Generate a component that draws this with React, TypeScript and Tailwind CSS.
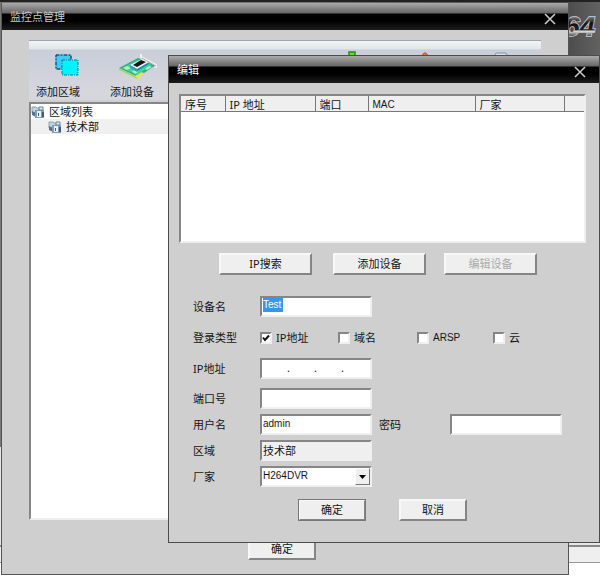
import type { ReactNode } from 'react';

const latin = "font-['Liberation_Sans','Noto_Sans_CJK_SC',sans-serif] text-[10px]";

const columns = [
  { label: '序号', width: 'w-11' },
  { label: 'IP 地址', width: 'w-[90px]' },
  { label: '端口', width: 'w-[53px]' },
  { label: 'MAC', width: 'w-[107px]', style: latin },
  { label: '厂家', width: 'w-[89px]' },
  { label: '', width: '' },
];

const loginTypes = [
  { id: 'ip', label: 'IP地址', checked: true },
  { id: 'domain', label: '域名', checked: false },
  { id: 'arsp', label: 'ARSP', checked: false, style: latin },
  { id: 'cloud', label: '云', checked: false },
];

const sunken = 'border-2 border-t-[#868686] border-l-[#868686] border-r-[#efefef] border-b-[#efefef]';
const field = `h-[21px] w-[112px] px-px pb-0.5 leading-4 outline-none ${sunken}`;

function TitleBar({ title, className }: { title: string; className: string }) {
  return (
    <header
      className={`flex h-[27px] shrink-0 items-center justify-between bg-[linear-gradient(#aaa_0px,#666_10px,#000_11px,#000_18px,#1c1c1c_27px)] ${className}`}
    >
      <h2 className="leading-4">{title}</h2>
      <button type="button" aria-label="关闭" className="pt-1">
        <svg width="12" height="12" viewBox="0 0 12 12" stroke="#c8c8c8" strokeWidth="1.6">
          <path d="M1 1l10 10M11 1L1 11" />
        </svg>
      </button>
    </header>
  );
}

function PushButton({ children, className, disabled }: { children: ReactNode; className: string; disabled?: boolean }) {
  return (
    <button
      type="button"
      disabled={disabled}
      className={`h-[22px] border-2 border-t-[#f8f8f8] border-l-[#f8f8f8] border-r-[#858585] border-b-[#858585] bg-[#efefef] leading-4 disabled:text-[#aaa] ${className}`}
    >
      {children}
    </button>
  );
}

function FormRow({ label, htmlFor, children }: { label: string; htmlFor?: string; children: ReactNode }) {
  return (
    <div className="flex items-center">
      <label htmlFor={htmlFor} className="w-[67px] shrink-0 leading-4">
        {label}
      </label>
      {children}
    </div>
  );
}

function RegionIcon() {
  return (
    <svg width="26" height="24" viewBox="0 0 26 24">
      <path d="M2 1h15v14H2z" fill="#45c8f4" />
      <path d="M2 1h15v14H2z" fill="none" stroke="#2a87a8" />
      <path d="M2 1h15v14H2z" fill="none" stroke="#123c50" strokeDasharray="3 2 1 2" />
      <path d="M8 6h16v15H8z" fill="#00f4ff" />
      <path d="M8 6h16v15H8z" fill="none" stroke="#087f8d" strokeDasharray="3 1 1 1" />
    </svg>
  );
}

function BoardIcon() {
  return (
    <svg width="42" height="28" viewBox="0 0 42 28">
      <path d="M1 16L20 6l18 7-18 12z" fill="#2fae8c" />
      <path d="M1 16l19 9v2L1 18z" fill="#9fd860" />
      <path d="M17 24l6-4 3 1-6 6z" fill="#e6e256" />
      <path d="M4 16L20 8l14 5-15 10z" fill="#45cf9d" />
      <path d="M5 16l4-2 4 2-4 2zM27 17l4-3 3 1-5 3zM14 19l3-1 3 2-3 2z" fill="#b6efb0" />
      <path d="M14 16l13-6 4 2-12 7z" fill="#0b90b0" />
      <path d="M12 13l12-6 7 3-12 7z" fill="#eef2f2" />
      <path d="M15 13l8-5 5 2-9 5z" fill="#161616" />
      <path d="M12 13l7 4v3l-7-4z" fill="#2aa3c8" />
      <path d="M23 2v3l15 8v3" fill="none" stroke="#f1efef" strokeWidth="2" />
      <path d="M24 6l14 8" stroke="#b9a8ae" />
    </svg>
  );
}

function CameraIcon() {
  return (
    <svg width="14" height="14" viewBox="0 0 14 14" className="shrink-0">
      <path d="M1 2h4l1 1h2v5H1z" fill="#c3d3de" stroke="#8fa3b2" />
      <path d="M1 6l4 2v4L1 10z" fill="#50718f" />
      <path d="M4 5h9v8H4z" fill="#7f9db5" />
      <path d="M8 2h4v3H8z" fill="#dde7ee" stroke="#6d8799" />
      <path d="M6 6h4v6H6z" fill="#e9f1f6" />
      <path d="M7 8h1v3H7zM11 7h2v5h-2z" fill="#3c5c7a" />
    </svg>
  );
}

function ManagerWindow() {
  return (
    <section className="absolute top-[3px] right-[31px] bottom-[2px] left-[1px] flex flex-col border border-t-0 border-[#555] bg-[#cfcfcf]">
      <TitleBar title="监控点管理" className="pr-3 pl-2 text-[#c8c8c8]" />
      <div className="mx-[27px] mt-2.5 flex h-[60px] shrink-0 items-end border-t border-[#9ca4b0] bg-[linear-gradient(#f2f5f7_0px,#dfe5ea_8px,#c9ced9_9px,#d6d6dd_50px)] pl-[7px]">
        <button type="button" className="flex flex-col items-end gap-1.5">
          <RegionIcon />
          <span className="leading-4">添加区域</span>
        </button>
        <button type="button" className="ml-[30px] flex flex-col items-start gap-1">
          <span className="ml-2">
            <BoardIcon />
          </span>
          <span className="leading-4">添加设备</span>
        </button>
        <div className="mr-[33px] mb-[42px] ml-auto flex w-[160px] items-end justify-between">
          <svg width="8" height="8" viewBox="0 0 8 8">
            <path d="M1 2h6v6H1z" fill="#66df2b" stroke="#258d12" strokeWidth="1.5" />
          </svg>
          <svg width="10" height="8" viewBox="0 0 10 8">
            <path d="M0 8l4-5h2l4 5z" fill="#f27632" stroke="#b5512a" />
          </svg>
          <svg width="14" height="8" viewBox="0 0 14 8">
            <rect x="1" y="3" width="12" height="9" rx="2" fill="#d6e4f1" stroke="#7891aa" />
          </svg>
        </div>
      </div>
      <ul className={`mx-[27px] mt-0.5 h-[418px] bg-white leading-[14px] ${sunken}`}>
        <li className="flex h-[15px] items-center gap-1">
          <CameraIcon />
          区域列表
        </li>
        <li className="flex h-[15px] items-center gap-1 bg-[#f0f0f0] pl-[17px]">
          <CameraIcon />
          技术部
        </li>
      </ul>
      <PushButton className="mt-[18px] ml-[246px] w-[68px] shrink-0">确定</PushButton>
    </section>
  );
}

function IpField() {
  return (
    <div className={`flex bg-white ${field}`}>
      {[1, 2, 3, 4].map((part) => (
        <span key={part} className="flex">
          <input
            id={`ip-${part}`}
            aria-label={`IP地址 ${part}`}
            className="w-6 bg-transparent text-center outline-none"
          />
          {part < 4 && <span className="w-[3px]">.</span>}
        </span>
      ))}
    </div>
  );
}

function EditDialog() {
  return (
    <section className="absolute top-[55px] right-0 bottom-[34px] left-[168px] border border-[#4c4c4c] bg-[#cfcfcf]">
      <TitleBar title="编辑" className="pr-[13px] pl-2 text-white" />
      <div className={`mt-[11px] mr-[13px] ml-2.5 h-[149px] bg-white ${sunken}`}>
        <table className="w-full table-fixed border-collapse bg-[#efefef]">
          <thead>
            <tr>
              {columns.map((col) => (
                <th
                  key={col.label}
                  className={`h-[15px] border-r border-b border-[#777] px-1 pt-0.5 pb-0 text-left leading-[13px] font-normal last:border-r-0 ${col.width} ${col.style ?? ''}`}
                >
                  {col.label}
                </th>
              ))}
            </tr>
          </thead>
        </table>
      </div>
      <div className="mt-2.5 ml-[50px] flex">
        <PushButton className="w-[93px]">IP搜索</PushButton>
        <PushButton className="ml-[21px] w-[93px]">添加设备</PushButton>
        <PushButton className="ml-[18px] w-[93px]" disabled>
          编辑设备
        </PushButton>
      </div>
      <form className="mt-[21px] ml-6">
        <FormRow label="设备名" htmlFor="device-name">
          <div className={`flex bg-white ${field}`}>
            <input
              id="device-name"
              defaultValue="Test"
              className={`h-[14px] w-5 bg-[#3297f5] leading-[14px] text-white outline-none ${latin}`}
            />
          </div>
        </FormRow>
        <fieldset className="mt-[11px] mb-2.5 flex h-5 items-center">
          <legend className="float-left w-[67px] leading-4">登录类型</legend>
          <div className="grid grid-cols-[78px_79px_76px_60px] items-center">
            {loginTypes.map((type) => (
              <label key={type.id} className={`flex items-center gap-1 leading-4 ${type.style ?? ''}`}>
                <span className="grid">
                  <input
                    type="checkbox"
                    defaultChecked={type.checked}
                    className={`peer col-start-1 row-start-1 size-3 appearance-none bg-white ${sunken}`}
                  />
                  <svg
                    width="12"
                    height="12"
                    viewBox="0 0 12 12"
                    className="pointer-events-none invisible col-start-1 row-start-1 peer-checked:visible"
                  >
                    <path d="M3 5.5l2 2.5 4-4.5" fill="none" stroke="#111" strokeWidth="2" />
                  </svg>
                </span>
                {type.label}
              </label>
            ))}
          </div>
        </fieldset>
        <FormRow label="IP地址" htmlFor="ip-1">
          <IpField />
        </FormRow>
        <div className="mt-[9px] flex flex-col gap-[5px]">
          <FormRow label="端口号" htmlFor="port">
            <input id="port" className={`bg-white ${field} ${latin}`} />
          </FormRow>
          <FormRow label="用户名" htmlFor="username">
            <input id="username" defaultValue="admin" className={`bg-white ${field} ${latin}`} />
            <label htmlFor="password" className="ml-[7px] w-[71px] leading-4">
              密码
            </label>
            <input id="password" type="password" className={`bg-white ${field} ${latin}`} />
          </FormRow>
          <FormRow label="区域" htmlFor="region">
            <input id="region" readOnly value="技术部" className={`bg-[#efefef] ${field}`} />
          </FormRow>
          <FormRow label="厂家" htmlFor="vendor">
            <div className="relative">
              <select id="vendor" className={`block appearance-none bg-white ${field} ${latin}`}>
                <option>H264DVR</option>
              </select>
              <span className="pointer-events-none absolute top-[2px] right-[2px] flex h-[17px] w-[15px] items-center justify-center border border-t-white border-r-[#777] border-b-[#777] border-l-white bg-[#efefef]">
                <svg width="7" height="4" viewBox="0 0 7 4">
                  <path d="M0 0h7L3.5 4z" />
                </svg>
              </span>
            </div>
          </FormRow>
        </div>
        <div className="mt-3 ml-[105px] flex gap-[33px]">
          <PushButton className="w-[68px] outline outline-[#777] -outline-offset-1">确定</PushButton>
          <PushButton className="w-[68px]">取消</PushButton>
        </div>
      </form>
    </section>
  );
}

function LogoTail() {
  return (
    <svg width="40" height="32" viewBox="0 0 40 32">
      <defs>
        <linearGradient id="chrome" x1="0" y1="0" x2="0" y2="1">
          <stop offset="0.2" stopColor="#777" />
          <stop offset="0.4" stopColor="#111" />
          <stop offset="0.6" stopColor="#222" />
          <stop offset="0.65" stopColor="#ddd" />
          <stop offset="0.8" stopColor="#555" />
        </linearGradient>
      </defs>
      <text
        x="4"
        y="24"
        fontSize="28"
        fontWeight="bold"
        fontStyle="italic"
        fontFamily="Liberation Sans, sans-serif"
        fill="url(#chrome)"
        stroke="#bdbdbd"
        strokeWidth="2"
        paintOrder="stroke"
      >
        64
      </text>
    </svg>
  );
}

// The main client window that shows round the edges of the dialogs
function Backdrop() {
  return (
    <div className="flex h-full min-h-[577px] flex-col">
      <div className="flex h-[447px] justify-end border-t-2 border-[#222] bg-[linear-gradient(90deg,#777_0px,#777_50%,#4a4a4a_94%,#626262_100%)] pt-2.5">
        <LogoTail />
      </div>
      <div className="h-[100px] border-b-2 border-[#888] bg-[#e5e8e8]" />
      <div className="h-4 border-b border-[#999] bg-[#efefef]" />
      <div className="grow bg-white" />
    </div>
  );
}

export default function App() {
  return (
    <main className="relative h-screen min-h-[577px] overflow-hidden bg-white font-['Noto_Sans','Noto_Sans_CJK_SC',sans-serif] text-[11px] text-[#151515]">
      <Backdrop />
      <ManagerWindow />
      <EditDialog />
    </main>
  );
}
